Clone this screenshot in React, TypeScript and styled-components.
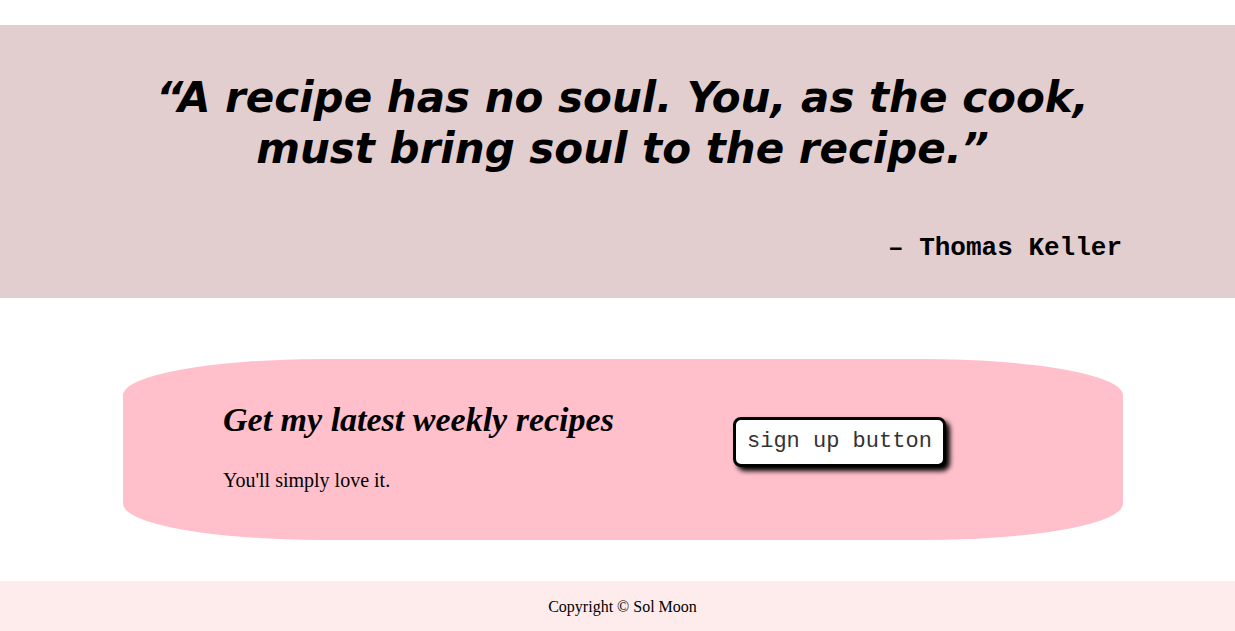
import * as React from 'react'
import styled, { createGlobalStyle } from 'styled-components'

const GlobalStyle = createGlobalStyle`
  html, body {
    margin: 0;
    padding: 0;
    background: #ffffff;
    font-family: "Liberation Serif", "Times New Roman", serif;
  }
`

const Page = styled.div`
  display: flex;
  flex-direction: column;
  padding-top: 25px;
`

const QuoteSection = styled.section`
  background: #e3cecf;
  height: 273px;
  box-sizing: border-box;
  padding: 47px 113px 0 0;
  display: flex;
  flex-direction: column;
`

const Quote = styled.h1`
  margin: 0;
  padding-left: 123px;
  text-align: center;
  font-family: "DejaVu Sans", Verdana, sans-serif;
  font-style: italic;
  font-weight: bold;
  font-size: 42px;
  line-height: 51px;
  color: #000;
`

const Author = styled.p`
  margin: 60px 0 0;
  text-align: right;
  font-family: "Liberation Mono", "Courier New", monospace;
  font-weight: bold;
  font-size: 26px;
  line-height: 28px;
  color: #000;
`

const SignupCard = styled.section`
  margin: 61px 0 41px 123px;
  width: 1000px;
  height: 181px;
  background: #ffc0cb;
  border-radius: 20% / 20%;
  box-sizing: border-box;
  padding: 40px 0 0 100px;
  display: flex;
  align-items: flex-start;
`

const SignupText = styled.div`
  display: flex;
  flex-direction: column;
  width: 410px;
`

const SignupTitle = styled.h2`
  margin: 0;
  font-family: "Liberation Serif", "Times New Roman", serif;
  font-style: italic;
  font-weight: bold;
  font-size: 34px;
  line-height: 42px;
`

const SignupNote = styled.p`
  margin: 28px 0 0;
  font-size: 20px;
  line-height: 22px;
`

const SignupButton = styled.button`
  margin: 18px 0 0 100px;
  padding: 10px 11px;
  background: #ffffff;
  border: 3px solid #000;
  border-radius: 8px;
  box-shadow: 4px 4px 5px #000;
  font-family: "Liberation Mono", "Courier New", monospace;
  font-size: 22px;
  line-height: 24px;
  color: #333;
  cursor: pointer;
`

const Footer = styled.footer`
  background: #fdeceb;
  height: 50px;
  padding: 1px 0 0 10px;
  display: flex;
  align-items: center;
  justify-content: center;
  font-size: 16px;
  color: #000;
`

export default function App () {
  return (
    <>
      <GlobalStyle />
      <Page>
        <QuoteSection>
          <Quote>“A recipe has no soul. You, as the cook,<br />must bring soul to the recipe.”</Quote>
          <Author>– Thomas Keller</Author>
        </QuoteSection>
        <SignupCard>
          <SignupText>
            <SignupTitle>Get my latest weekly recipes</SignupTitle>
            <SignupNote>You'll simply love it.</SignupNote>
          </SignupText>
          <SignupButton>sign up button</SignupButton>
        </SignupCard>
        <Footer>Copyright © Sol Moon</Footer>
      </Page>
    </>
  )
}
